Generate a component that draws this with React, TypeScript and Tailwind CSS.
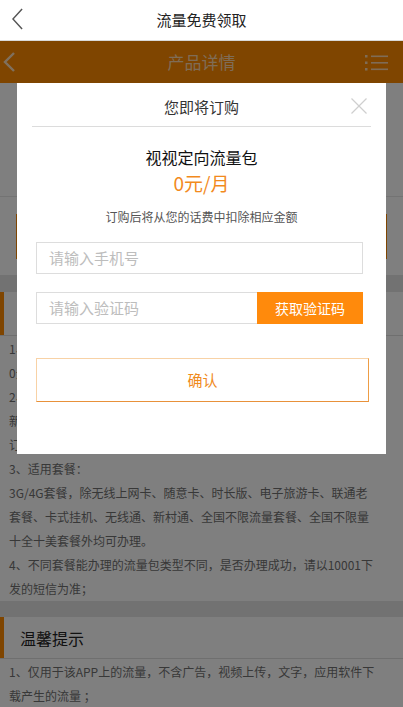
const lines = [
  "1、资费说明：",
  "0元/月，当月有效；",
  "2、生效规则：",
  "新用户订购后立即生效；",
  "订购后次月自动续订；",
  "3、适用套餐：",
  "3G/4G套餐，除无线上网卡、随意卡、时长版、电子旅游卡、联通老",
  "套餐、卡式挂机、无线通、新村通、全国不限流量套餐、全国不限量",
  "十全十美套餐外均可办理。",
  "4、不同套餐能办理的流量包类型不同，是否办理成功，请以10001下",
  "发的短信为准；",
];

function Chevron({ className, stroke }: { className: string; stroke: string }) {
  return (
    <svg className={className} viewBox="0 0 12 24" fill="none">
      <polyline points="11,1 1,12 11,23" stroke={stroke} strokeWidth="1.6" />
    </svg>
  );
}

export default function App() {
  return (
    <div
      className="h-[707px] w-[403px] overflow-hidden bg-white"
      style={{ fontFamily: "'Noto Sans CJK SC', sans-serif" }}
    >
      {/* app title bar */}
      <div className="relative flex h-[41px] items-center justify-center border-b border-[#d9d9d9] bg-white">
        <Chevron className="absolute left-[12px] top-[8px] h-[22px] w-[11px]" stroke="#555" />
        <span className="text-[15px] text-[#222]">流量免费领取</span>
      </div>

      {/* webview */}
      <div className="relative h-[666px] overflow-hidden">
        <div className="relative flex h-[42px] items-center justify-center bg-[#ff8a00]">
          <svg className="absolute left-[3px] top-[11px] h-[20px] w-[12px]" viewBox="0 0 12 20" fill="none">
            <polyline points="11,1 2,10 11,19" stroke="#ffe0bb" strokeWidth="2.4" />
          </svg>
          <span className="text-[17px] text-[#ffd9ad]">产品详情</span>
          <svg className="absolute right-[15px] top-[13px] h-[17px] w-[23px]" viewBox="0 0 23 17" fill="#ffd9ad">
            <rect x="0" y="1" width="2.5" height="2.5" />
            <rect x="0" y="7.5" width="2.5" height="2.5" />
            <rect x="0" y="14" width="2.5" height="2.5" />
            <rect x="6" y="1.5" width="17" height="1.6" />
            <rect x="6" y="8" width="17" height="1.6" />
            <rect x="6" y="14.5" width="17" height="1.6" />
          </svg>
        </div>

        <div className="h-[114px] border-b border-[#e6e6e6] bg-white" />

        <div className="bg-white px-[16px] pb-[16px] pt-[17px]">
          <div className="h-[45px] border border-[#ff8a00]" />
        </div>

        <div className="h-[17px] bg-[#e4e4e4]" />

        <div className="flex h-[44px] items-center border-b border-[#dedede] bg-white">
          <div className="h-full w-[4px] bg-[#ff8a00]" />
        </div>
        <div className="bg-white px-[9px] pt-[1px] text-[12px] leading-[24px] text-[#707070]">
          {lines.map((l) => (
            <div key={l} className="whitespace-nowrap">{l}</div>
          ))}
        </div>

        <div className="h-[16px] bg-[#e4e4e4]" />

        <div className="flex h-[42px] items-center border-b border-[#dedede] bg-white">
          <div className="h-full w-[4px] bg-[#ff8a00]" />
          <span className="ml-[16px] text-[16px] text-[#222]">温馨提示</span>
        </div>
        <div className="bg-white px-[9px] pt-[1px] text-[12px] leading-[23.5px] text-[#707070]">
          <div className="whitespace-nowrap">1、仅用于该APP上的流量，不含广告，视频上传，文字，应用软件下</div>
          <div className="whitespace-nowrap">载产生的流量 ；</div>
        </div>

        {/* mask */}
        <div className="absolute inset-0 bg-black/50" />

        {/* dialog */}
        <div className="absolute left-[17px] top-[42px] w-[369px] bg-white pb-[52px]">
          <div className="relative flex h-[43px] items-center justify-center pt-[5px]">
            <span className="text-[15px] text-[#333]">您即将订购</span>
            <svg className="absolute right-[19px] top-[15px] h-[16px] w-[16px]" viewBox="0 0 16 16" stroke="#cfcfcf" strokeWidth="1.2">
              <line x1="0.5" y1="0.5" x2="15.5" y2="15.5" />
              <line x1="15.5" y1="0.5" x2="0.5" y2="15.5" />
            </svg>
          </div>
          <div className="mx-[15px] h-px bg-[#dcdcdc]" />

          <div className="mt-[18px] text-center text-[16px] leading-[24px] text-[#111]">视视定向流量包</div>
          <div className="text-center text-[19px] leading-[28px] text-[#f28a1d]">0元/月</div>
          <div className="mt-[11px] text-center text-[12px] leading-[18px] text-[#555]">订购后将从您的话费中扣除相应金额</div>

          <div className="ml-[19px] mt-[16px] flex h-[32px] w-[327px] items-center border border-[#dddddd] px-[12px] text-[15px] text-[#bdbdbd]">
            请输入手机号
          </div>

          <div className="ml-[19px] mt-[18px] flex h-[32px] w-[327px]">
            <div className="flex flex-1 items-center border border-r-0 border-[#dddddd] px-[12px] text-[15px] text-[#bdbdbd]">
              请输入验证码
            </div>
            <div className="flex w-[106px] items-center justify-center bg-[#ff8a0c] text-[14px] text-white">获取验证码</div>
          </div>

          <div className="ml-[19px] mt-[34px] flex h-[44px] w-[333px] items-center justify-center border border-[#f8d2a6] border-b-[#e8913a] border-r-[#ee9d45] text-[15px] text-[#f08a1c]">
            确认
          </div>
        </div>
      </div>
    </div>
  );
}
